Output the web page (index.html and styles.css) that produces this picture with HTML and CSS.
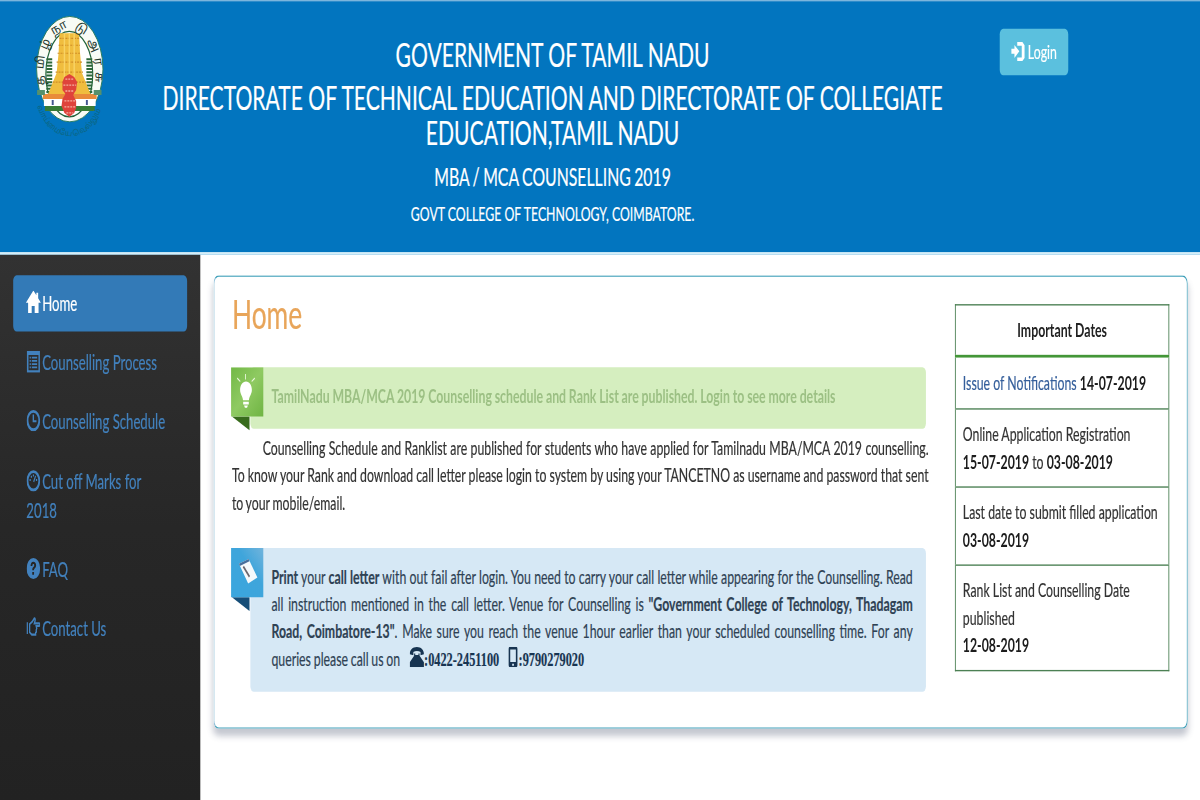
FILE: index.html
```
<!DOCTYPE html>
<html lang="en">
<head>
<meta charset="utf-8">
<title>MBA / MCA Counselling 2019</title>
<link rel="stylesheet" href="styles.css">
</head>
<body>
<svg width="0" height="0" class="defs">
  <symbol id="home" viewBox="0 0 15 15"><path d="M7.500 0 0 8h2.200v6.500h3.600V10h3v4.500h3.900V8H15L12.300 5V1.500h-1.800v1.600z"/></symbol>
  <symbol id="list" viewBox="0 0 15 15"><path fill-rule="evenodd" d="M.5 0h14v15H.5zM2.300 3v10.300h10.600V3zM3.500 4.200h1.300v1.200H3.500zM5.800 4.200h5.700v1.200H5.800zM3.500 6.400h1.300v1.200H3.500zM5.800 6.400h5.700v1.200H5.800zM3.500 8.600h1.300v1.200H3.500zM5.800 8.600h5.700v1.200H5.800zM3.500 10.800h1.300V12H3.500zM5.800 10.800h5.700V12H5.800z"/></symbol>
  <symbol id="clock" viewBox="0 0 15 15"><circle cx="7.500" cy="7.500" r="6.300" fill="none" stroke="currentColor" stroke-width="2"/><path d="M6.700 3.300h1.500v3.900h2.600v1.400H6.700z"/></symbol>
  <symbol id="gauge" viewBox="0 0 15 15"><circle cx="7.500" cy="7.500" r="6.300" fill="none" stroke="currentColor" stroke-width="2"/><path d="M3.400 6.300h1.300v1.300H3.400zM4.700 4H6v1.300H4.700zM6.900 3.200h1.300v1.300H6.900zM10.200 6.300h1.300v1.300h-1.300zM9.400 3.900l.9.500-1.900 4.100-1.200-.5z"/></symbol>
  <symbol id="question" viewBox="0 0 15 15"><path fill-rule="evenodd" d="M7.500.2a7.200 7.200 0 1 1 0 14.500 7.200 7.200 0 0 1 0-14.500zM4.500 5.700h1.900c0-.9.400-1.300 1-1.300.7 0 1 .3 1 .9 0 .5-.3.800-.9 1.200-.8.500-1.200 1-1.200 2.200h1.800c0-.7.300-.9 1-1.400.8-.5 1.300-1.100 1.300-2.100 0-1.500-1.200-2.400-3-2.400-1.700 0-2.800 1-2.900 2.900zM6.300 9.800v1.900h1.900V9.800z"/></symbol>
  <symbol id="hand" viewBox="0 0 15 15"><path d="M0 4h1.700v8H0z"/><path fill="none" stroke="currentColor" stroke-width="1.400" d="M3.500 5.200 6.300 3.500 8.500 1.200c.9 0 1.200.9.800 1.700L8.500 4.700h5.200c.9 0 .9 1.800 0 1.800H10.500l.6 1.600-.6 1.200.2 1.200-.8.600v1.300H5.800L3.500 10.800z"/></symbol>
  <symbol id="login" viewBox="0 0 15 15"><path d="M0 5.300h3.500V2.600L8.700 7l-5.200 4.600V8.700H0zM6.500.6H12l2.300 2.200v8.800L12 13.700H6.500v-2.500h4.800V3.100H6.500z"/></symbol>
  <symbol id="phone" viewBox="0 0 15 14"><path d="M0 5.200C0 2.200 3 .3 7.500.3S15 2.200 15 5.200l-3.600.6V3.600c-2.200-.9-5.400-.9-7.600 0v2.200L0 5.200zM4.600 4.600h1.200v1.100h3.400V4.600h1.200v1.600l4.600 4.500V14H0v-3.300l4.600-4.500z"/></symbol>
  <symbol id="mobile" viewBox="0 0 11 15"><path fill-rule="evenodd" d="M2 0h7q1.500 0 1.500 1.500v12Q10.500 15 9 15H2Q.5 15 .5 13.500v-12Q.5 0 2 0zm.3 2v9.300h6.400V2zM4.500 12.500v1.400h2v-1.400z"/></symbol>
</svg>
<div class="page">
  <header class="header">
    <svg class="logo" viewBox="0 0 72 124" preserveAspectRatio="none">
      <path id="under" d="M2 90Q12 119 35 120T70 88" fill="none"/>
      <ellipse cx="35.500" cy="53" rx="34" ry="53" fill="#f8fbf5"/>
      <ellipse cx="35.500" cy="53" rx="34" ry="53" fill="none" stroke="#2b7d62" stroke-width="1"/>
      <ellipse cx="35" cy="58" rx="24" ry="43" fill="#fff" stroke="#23633a" stroke-width="1.200"/>
      <path d="M14.500 42v36M55.500 42v36" stroke="#2c6839" stroke-width="6" stroke-dasharray="2 1.300"/>
      <path d="M25 17h20l1 20 2 20 10 24H12l10-24 2-20z" fill="#f0bd3e"/>
      <path d="M25 22h20M24 29h22M23 37h24M22 46h26M21 56h28M18 66h34" stroke="#cf8d27" stroke-width="1.200" stroke-dasharray="2 1"/>
      <path d="M30 17v60M35 17v60M40 17v60" stroke="#f8d365" stroke-width="1.500"/>
      <path d="M8 78h55v5H8z" fill="#e98b3a"/><path d="M9 83h53v7H9z" fill="#fff"/><path d="M10 90h51v5H10z" fill="#397c36"/>
      <path d="M2 74h8v5H2zM60 74h8v5h-8z" fill="#56906c"/>
      <path d="M28 66l2-5 5-3 5 3 3 5-1 8-3 5 3 6v7l-2 5-5 4-5-4-3-7 1-7 3-5-3-4z" fill="#df433b"/>
      <path d="M31 63h9M29 69h13M31 75h8M30 85h12M30 91h12M32 97h7" stroke="#f5b0a0" stroke-width="1.300" stroke-dasharray="2 1"/>
      <path d="M18 84v5M53 84v5" stroke="#455690" stroke-width="2"/>
      <path id="arc" d="M10 69Q5 38 20 19 35 5 50 19 65 38 61 72" fill="none"/>
      <text class="seal"><textPath href="#arc" textLength="136">த மி ழ் நா டு அ ர சு</textPath></text>
      <text class="motto"><textPath href="#under" textLength="92">வாய்மையே வெல்லும்</textPath></text>
    </svg>
    <div class="titles">
      <h3>GOVERNMENT OF TAMIL NADU</h3>
      <h3>DIRECTORATE OF TECHNICAL EDUCATION AND DIRECTORATE OF COLLEGIATE<br>EDUCATION,TAMIL NADU</h3>
      <h4>MBA / MCA COUNSELLING 2019</h4>
      <h5>GOVT COLLEGE OF TECHNOLOGY, COIMBATORE.</h5>
    </div>
    <a class="login"><svg class="icon"><use href="#login"/></svg> Login</a>
  </header>
  <div class="body">
    <nav class="side">
      <a class="item active"><svg class="icon wide"><use href="#home"/></svg>Home</a>
      <a class="item"><svg class="icon"><use href="#list"/></svg>Counselling Process</a>
      <a class="item"><svg class="icon"><use href="#clock"/></svg>Counselling Schedule</a>
      <a class="item"><svg class="icon"><use href="#gauge"/></svg>Cut off Marks for<br>2018</a>
      <a class="item"><svg class="icon"><use href="#question"/></svg>FAQ</a>
      <a class="item"><svg class="icon"><use href="#hand"/></svg>Contact Us</a>
    </nav>
    <main class="panel">
      <section class="content">
        <h2>Home</h2>
        <div class="note green">
          <svg class="ribbon" viewBox="0 0 37 47">
            <defs><linearGradient id="g" x2="1" y2="1"><stop stop-color="#72b846"/><stop offset=".5" stop-color="#8fca62"/><stop offset="1" stop-color="#6fb443"/></linearGradient></defs>
            <path d="M1 36 21 46V36z" fill="#386b1c"/><path d="M0 0h37v36H0z" fill="url(#g)"/>
            <path d="M17 10.500c4 0 6.700 2.700 6.700 6.200 0 3-3 4.500-3.300 7.500h-6.800c-.3-3-3.300-4.500-3.300-7.500 0-3.500 2.700-6.200 6.700-6.200zM13.800 25.200h6.400v2h-6.400zM14.800 28h4.400l-1 1.700h-2.400z" fill="#fff"/>
            <path d="M16.500 5v4M7 8l3.500 2.500M27 8l-3.500 2.500" stroke="#eaf7dc" stroke-width="1"/>
          </svg>
          <b>TamilNadu MBA/MCA 2019 Counselling schedule and Rank List are published. Login to see more details</b>
        </div>
        <p class="intro">Counselling Schedule and Ranklist are published for students who have applied for Tamilnadu MBA/MCA 2019 counselling. To know your Rank and download call letter please login to system by using your TANCETNO as username and password that sent to your mobile/email.</p>
        <div class="note blue">
          <svg class="ribbon" viewBox="0 0 37 47">
            <defs><linearGradient id="b" x1="1" y1="0" x2="0" y2="1"><stop stop-color="#72b4dc"/><stop offset=".4" stop-color="#3fa5db"/><stop offset="1" stop-color="#3aa6de"/></linearGradient></defs>
            <path d="M1 36 21 46V36z" fill="#164e78"/><path d="M0 0h37v36H0z" fill="url(#b)"/>
            <path d="M9 11.500 20 8l10 13.500-10.500 4.500z" fill="#f6f9fb"/><path d="M9 11.500 20 8l1 1.700-11 3.500z" fill="#496f9c"/><path d="M14 13.500l7 7.500" stroke="#6b666d" stroke-width="1.800"/>
          </svg>
          <b>Print</b> your <b>call letter</b> with out fail after login. You need to carry your call letter while appearing for the Counselling. Read all instruction mentioned in the call letter. Venue for Counselling is <b>"Government College of Technology, Thadagam Road, Coimbatore-13"</b>. Make sure you reach the venue 1hour earlier than your scheduled counselling time. For any queries please call us on <span class="tel"><svg class="i-phone" preserveAspectRatio="none"><use href="#phone"/></svg>:0422-2451100</span><span class="tel second"><svg class="i-mobile"><use href="#mobile"/></svg>:9790279020</span>
        </div>
      </section>
      <table class="dates">
        <thead><tr><th>Important Dates</th></tr></thead>
        <tbody>
          <tr><td><a>Issue of Notifications</a> <b>14-07-2019</b></td></tr>
          <tr><td>Online Application Registration<br><b>15-07-2019</b> to <b>03-08-2019</b></td></tr>
          <tr><td>Last date to submit filled application<br><b>03-08-2019</b></td></tr>
          <tr><td>Rank List and Counselling Date<br>published<br><b>12-08-2019</b></td></tr>
        </tbody>
      </table>
    </main>
  </div>
</div>
</body>
</html>
```
FILE: styles.css
```
* { box-sizing: border-box; }
html, body { margin: 0; width: 1200px; height: 800px; overflow: hidden; background: #fff; }
.defs { position: absolute; }
svg { fill: currentColor; }
.page {
  width: 1366px; height: 584px;
  transform: scale(.8785, 1.37); transform-origin: 0 0;
  display: flex; flex-direction: column;
  font: 14px/20.1px Lato, sans-serif; color: #333;
  -webkit-text-stroke: .15px currentColor;
}
.header {
  height: 186px; flex: none; display: flex; align-items: flex-start;
  background: #0275bf; color: #fff;
  border-top: 1px solid #7cb5dc; border-bottom: 2.500px solid #d5eef9;
}
.logo { width: 80px; height: 90px; margin: 11px 0 0 40px; flex: none; overflow: visible; }
.seal { font: 12px "Noto Sans Tamil", "Noto Sans", sans-serif; fill: #26392f; }
.motto { font: 8px "Noto Sans Tamil", "Noto Sans", sans-serif; fill: #0b6784; }
.titles { width: 910px; margin: 25.700px 0 0 54px; text-align: center; white-space: nowrap; }
.titles h3, .titles h4, .titles h5 { margin: 0 0 5px; font-weight: 400; }
.titles h3 { font-size: 24px; line-height: 26.200px; }
.titles h4 { font-size: 18px; line-height: 20px; margin: 9px 0; word-spacing: -.7px; }
.titles h5 { font-size: 14px; line-height: 16px; }
.login {
  margin: 20px 0 0 54px; width: 78px; height: 34px; border-radius: 4px;
  background: #5bc0de; display: flex; align-items: center; justify-content: center; gap: 3px;
}
.icon { width: 16px; height: 16px; vertical-align: -2px; }
.body { flex: 1; display: flex; min-height: 0; }
.side { width: 228px; flex: none; padding: 15px; background: linear-gradient(#323232, #272727 50%, #222); display: flex; flex-direction: column; gap: 2px; }
.item { display: block; padding: 10px 15px; border-radius: 4px; font-size: 15px; line-height: 21.200px; color: #4281bd; }
.item.active { background: #337ab7; color: #fff; }
.item .icon { margin-right: 2px; }
.item .wide { width: 18px; height: 17px; margin: -2px 1px 0 -1px; }
.panel {
  margin: 15px 0 0 15px; width: 1109px; height: 331px; padding: 0 20px;
  border: 1px solid #3e9fb9; border-left-color: #8cbdd7; border-radius: 6px;
  box-shadow: 0 5px 6px rgba(60, 70, 100, .3);
  display: flex; justify-content: space-between; align-items: flex-start;
}
.content { width: 793px; }
h2 { margin: 8px 0 22px; font-size: 30px; line-height: 36px; font-weight: 400; color: #e8a55a; }
.note { position: relative; margin-left: 21px; width: 769px; border-radius: 4px; }
.ribbon { position: absolute; left: -22px; top: 0; width: 37px; height: 47px; }
.green { height: 45px; padding: 10.500px 24px; background: #d5eebf; color: #9cc084; -webkit-text-stroke: 0; word-spacing: -.2px; }
.intro { margin: 4.200px 0 22.500px; text-indent: 35px; text-align: justify; word-spacing: -.6px; }
.blue { height: 105px; padding: 11px 15px 0 24px; background: #d6e8f5; color: #2f4254; text-align: justify; word-spacing: -.4px; }
.tel { font: bold 14px "Liberation Serif", serif; margin-left: 7px; color: #173451; white-space: nowrap; }
.second { margin-left: 10px; }
.i-phone { width: 17px; height: 15px; vertical-align: -1px; }
.i-mobile { width: 12px; height: 15px; vertical-align: -1px; }
.dates { margin-top: 20.400px; width: 244px; border-collapse: collapse; border: 1px solid #4c8054; }
.dates th { border-bottom: 2px solid #439638; padding: 8px; height: 37.500px; color: #222; -webkit-text-stroke: 0; }
.dates td { border-top: 1px solid #4c8054; padding: 8.400px 8px 7.600px; white-space: nowrap; }
.dates tr:first-child td { border-top: 2px solid #439638; }
.dates b { color: #1c1c1c; -webkit-text-stroke: 0; }
.dates a { color: #355f9b; }
```
